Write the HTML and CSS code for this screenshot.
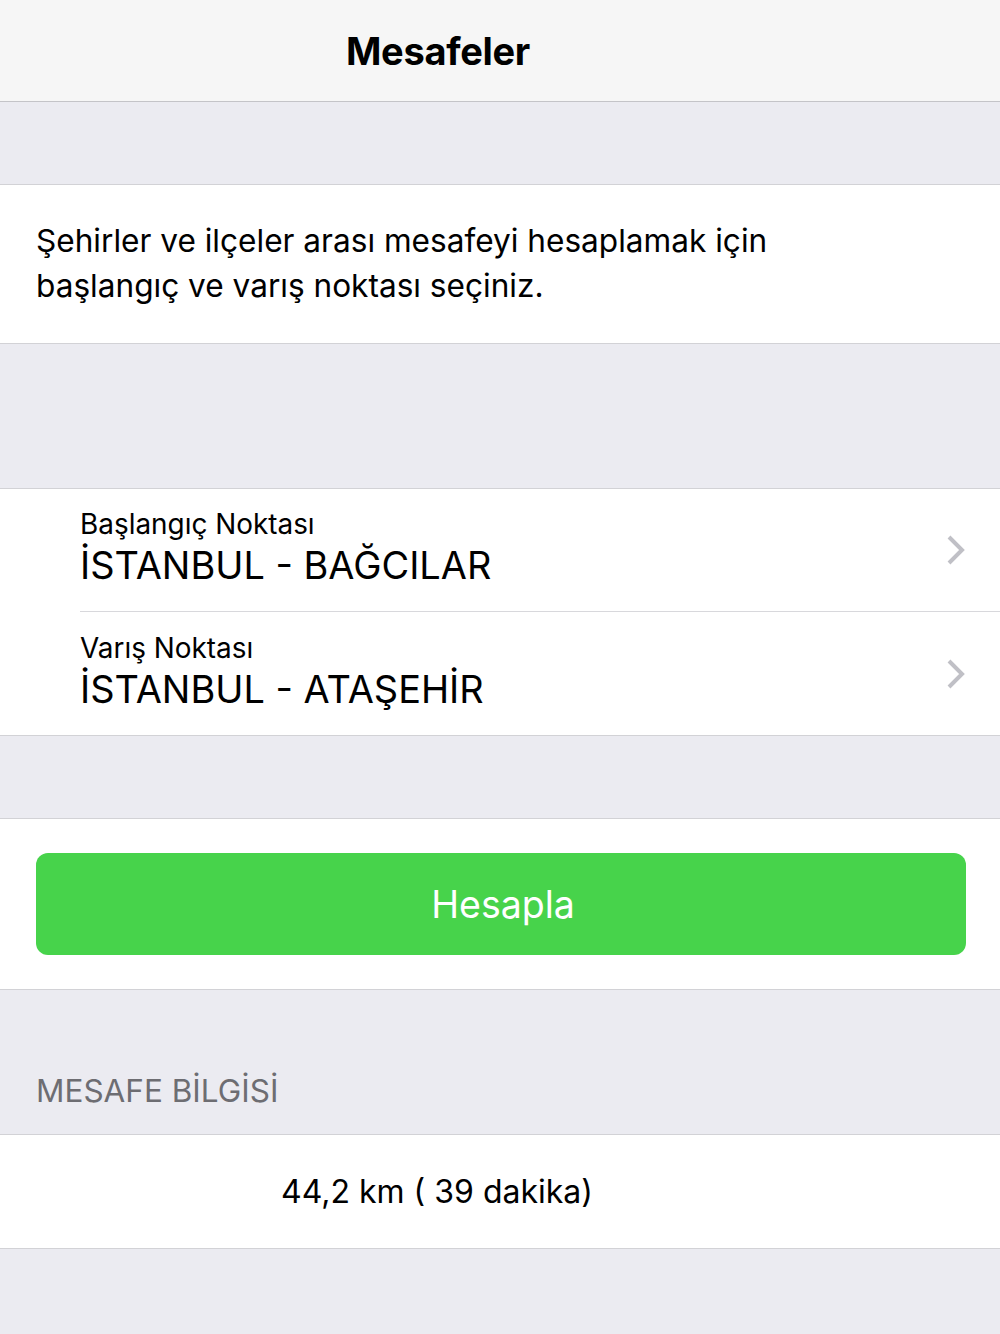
FILE: index.html
```html
<!DOCTYPE html>
<html lang="tr">
<head>
<meta charset="utf-8">
<title>Mesafeler</title>
<link rel="stylesheet" href="styles.css">
</head>
<body>
<div class="app">
  <header class="navbar"><h1 class="nav-title">Mesafeler</h1></header>
  <div class="gap gap-top"></div>
  <section class="group">
    <p class="intro">Şehirler ve ilçeler arası mesafeyi hesaplamak için başlangıç ve varış noktası seçiniz.</p>
  </section>
  <div class="gap gap-mid"></div>
  <section class="group">
    <div class="cell">
      <div class="cell-text">
        <div class="cell-label">Başlangıç Noktası</div>
        <div class="cell-value">İSTANBUL - BAĞCILAR</div>
      </div>
      <svg class="chevron" width="20" height="30" viewBox="0 0 20 30"><path d="M3 2 L16 15 L3 28" fill="none" stroke="#c0c0c6" stroke-width="4"/></svg>
    </div>
    <div class="cell cell-last">
      <div class="cell-text">
        <div class="cell-label">Varış Noktası</div>
        <div class="cell-value">İSTANBUL - ATAŞEHİR</div>
      </div>
      <svg class="chevron" width="20" height="30" viewBox="0 0 20 30"><path d="M3 2 L16 15 L3 28" fill="none" stroke="#c0c0c6" stroke-width="4"/></svg>
    </div>
  </section>
  <div class="gap gap-small"></div>
  <section class="group button-group">
    <button class="btn-calc">Hesapla</button>
  </section>
  <div class="section-header">MESAFE BİLGİSİ</div>
  <section class="group">
    <div class="result">44,2 km ( 39 dakika)</div>
  </section>
  <div class="gap gap-bottom"></div>
</div>
</body>
</html>
```
FILE: styles.css
```css
html, body {
  margin: 0;
  padding: 0;
  background: #ebebf1;
}
body {
  font-family: Inter, "Noto Sans", sans-serif;
  color: #000;
  -webkit-font-smoothing: antialiased;
}
.app {
  width: 1000px;
  min-height: 1334px;
  background: #ebebf1;
  display: flex;
  flex-direction: column;
}
.navbar {
  height: 101px;
  background: #f6f6f6;
  border-bottom: 1px solid #c4c4c8;
  display: flex;
  align-items: center;
  justify-content: center;
  padding-right: 124px;
  box-sizing: content-box;
}
.nav-title {
  margin: 0;
  font-size: 38px;
  font-weight: 700;
  letter-spacing: -0.3px;
}
.gap { background: #ebebf1; }
.gap-top { height: 82px; }
.gap-mid { height: 144px; }
.gap-small { height: 82px; }
.gap-bottom { flex: 1; }
.group {
  background: #fff;
  border-top: 1px solid #d2d2d6;
  border-bottom: 1px solid #d2d2d6;
}
.intro {
  margin: 0;
  padding: 33px 150px 35px 36px;
  font-size: 31.6px;
  line-height: 45px;
  font-weight: 400;
}
.cell {
  display: flex;
  align-items: center;
  margin-left: 80px;
  padding-right: 34px;
  height: 122px;
  border-bottom: 1px solid #d8d8dc;
}
.cell-last { border-bottom: none; height: 123px; }
.cell-text {
  flex: 1;
  display: flex;
  flex-direction: column;
  padding-bottom: 6px;
}
.cell-label {
  font-size: 27.9px;
  line-height: 36px;
}
.cell-value {
  font-size: 37.9px;
  line-height: 46px;
}
.chevron { display: block; }
.button-group {
  padding: 34px 34px 34px 36px;
}
.btn-calc {
  display: block;
  width: 100%;
  height: 102px;
  border: none;
  border-radius: 12px;
  background: #47d34b;
  color: #fff;
  font-family: inherit;
  font-size: 37.5px;
  font-weight: 400;
  padding: 0 0 0 4px;
}
.section-header {
  height: 144px;
  box-sizing: border-box;
  padding: 0 36px 24px;
  display: flex;
  align-items: flex-end;
  color: #6d6d72;
  font-size: 31.5px;
}
.result {
  height: 113px;
  display: flex;
  align-items: center;
  justify-content: center;
  padding-right: 126px;
  font-size: 32px;
}
```
